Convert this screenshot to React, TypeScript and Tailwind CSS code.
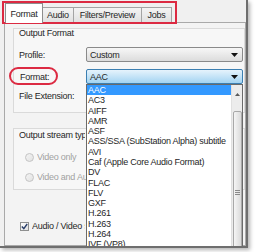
import React from "react"

const formats = [
    "AAC",
    "AC3",
    "AIFF",
    "AMR",
    "ASF",
    "ASS/SSA (SubStation Alpha) subtitle",
    "AVI",
    "Caf (Apple Core Audio Format)",
    "DV",
    "FLAC",
    "FLV",
    "GXF",
    "H.261",
    "H.263",
    "H.264",
    "IVF (VP8)",
]

const Arrow = () => (
    <svg width="7" height="4" viewBox="0 0 7 4" className="shrink-0">
        <path d="M0 0 L7 0 L3.5 4 Z" fill="#111" />
    </svg>
)

// labels that run under the open list are cut where the list starts
const Radio = ({ label }: { label: string }) => (
    <div className="h-[14px] flex flex-row items-center gap-[3px] pl-[6px]">
        <div className="w-[9px] h-[9px] shrink-0 rounded-full border border-[#c4c4c4] bg-gradient-to-br from-[#f4f4f4] to-[#e2e2e2]" />
        <span className="w-[53px] text-[#a2a2a2] whitespace-nowrap overflow-hidden">{label}</span>
    </div>
)

export default function App() {
    return (
        <div className="w-[259px] h-[252px] bg-white relative overflow-hidden text-[9px] leading-[10px] tracking-[-0.25px] text-[#262626] font-['Liberation_Sans',Arial,sans-serif]">
            <div className="w-[248px] h-[248px] bg-[#f0f0f0] border-r-2 border-b-2 border-[#6e6e6e] shadow-[2px_2px_4px_rgba(0,0,0,0.3)] overflow-hidden flex flex-col pt-[3px] pl-[4px]">
                {/* tabs */}
                <div className="h-[19px] flex flex-row items-end pl-[1px] relative z-10">
                    <div className="w-[38px] h-[20px] -mb-[1px] bg-white border border-b-0 border-[#8d8d8d] flex items-center justify-center">Format</div>
                    <div className="w-[31px] h-[15px] bg-gradient-to-b from-[#f4f4f4] to-[#e1e1e1] border border-l-0 border-b-0 border-[#a4a4a4] flex items-center justify-center">Audio</div>
                    <div className="w-[68px] h-[15px] bg-gradient-to-b from-[#f4f4f4] to-[#e1e1e1] border border-l-0 border-b-0 border-[#a4a4a4] flex items-center justify-center">Filters/Preview</div>
                    <div className="w-[30px] h-[15px] bg-gradient-to-b from-[#f4f4f4] to-[#e1e1e1] border border-l-0 border-b-0 border-[#a4a4a4] flex items-center justify-center">Jobs</div>
                </div>

                {/* tab page */}
                <div className="w-[242px] flex-1 bg-[#f3f3f3] border border-[#a9a9a9] flex flex-col pl-[8px]">
                    <div className="w-[232px] h-[85px] mt-[5px] bg-[#f7f7f7] border border-[#dadada] flex flex-col pl-[5px]">
                        <span className="leading-[9px]">Output Format</span>

                        <div className="h-[15px] mt-[9px] flex flex-row items-center">
                            <span className="w-[67px]">Profile:</span>
                            <div className="w-[157px] h-[15px] rounded-[2px] border border-[#8a8a8a] bg-gradient-to-b from-[#f7f7f7] to-[#dcdcdc] flex flex-row items-center justify-between pl-[3px] pr-[4px]">
                                <span>Custom</span>
                                <Arrow />
                            </div>
                        </div>

                        <div className="h-[15px] mt-[7px] flex flex-row items-center">
                            <span className="w-[67px] pl-[1px]">Format:</span>
                            <div className="relative w-[157px] h-[15px]">
                                <div className="w-full h-full rounded-[2px] border border-[#3c7fb1] bg-gradient-to-b from-[#e6f3fc] to-[#a3d4f2] flex flex-row items-center justify-between pl-[3px] pr-[4px]">
                                    <span>AAC</span>
                                    <Arrow />
                                </div>

                                {/* open list */}
                                <div className="absolute top-full left-0 w-full h-[170px] bg-white border border-[#6a6a6a] flex flex-row">
                                    <div className="flex-1 flex flex-col">
                                        {formats.map((f, i) => (
                                            <div
                                                key={f}
                                                className={
                                                    i === 0
                                                        ? "h-[10.27px] shrink-0 flex items-center pl-[1px] bg-[#3399ff] text-white whitespace-nowrap"
                                                        : "h-[10.27px] shrink-0 flex items-center pl-[1px] whitespace-nowrap"
                                                }
                                            >
                                                {f}
                                            </div>
                                        ))}
                                    </div>
                                    <div className="w-[11px] bg-[#ececec] border-l border-[#e0e0e0] flex flex-col items-center">
                                        <div className="h-[18px] flex items-center justify-center">
                                            <svg width="5" height="3" viewBox="0 0 5 3">
                                                <path d="M0 3 L5 3 L2.5 0 Z" fill="#5a5a5a" />
                                            </svg>
                                        </div>
                                        <div className="w-[9px] flex-1 mt-[8px] rounded-[2px] border border-[#a8a8a8] bg-gradient-to-r from-[#f5f5f5] to-[#dadada] flex flex-col items-center pt-[78px] gap-[1px]">
                                            <div className="w-[5px] h-px bg-[#8a8a8a]" />
                                            <div className="w-[5px] h-px bg-[#8a8a8a]" />
                                            <div className="w-[5px] h-px bg-[#8a8a8a]" />
                                        </div>
                                    </div>
                                </div>
                            </div>
                        </div>

                        <div className="h-[15px] mt-[4px] flex flex-row items-center">
                            <span>File Extension:</span>
                        </div>
                    </div>

                    <div className="w-[232px] h-[62px] mt-[15px] bg-[#f7f7f7] border border-[#dadada] flex flex-col pl-[5px] pt-[1px]">
                        <span className="w-[66px] whitespace-nowrap overflow-hidden">Output stream type</span>
                        <div className="mt-[10px]">
                            <Radio label="Video only" />
                        </div>
                        <div className="mt-[6px]">
                            <Radio label="Video and Audio" />
                        </div>
                    </div>

                    <div className="h-[12px] mt-[30px] flex flex-row items-center gap-[3px] pl-[7px]">
                        <div className="w-[9px] h-[9px] shrink-0 border border-[#8e8f8f] bg-gradient-to-br from-[#ffffff] to-[#e0e0e0] flex items-center justify-center">
                            <svg width="7" height="7" viewBox="0 0 7 7">
                                <path d="M0.8 3.6 L2.8 5.6 L6.2 1" stroke="#2a3f6a" strokeWidth="1.4" fill="none" />
                            </svg>
                        </div>
                        <span className="w-[53px] whitespace-nowrap overflow-hidden">Audio / Video stream</span>
                    </div>
                </div>
            </div>

            {/* annotations */}
            <div className="absolute left-[2px] top-[1px] w-[175px] h-[23px] border-2 border-[#dc2a42] pointer-events-none" />
            <div className="absolute left-[9px] top-[67px] w-[49px] h-[18px] border-2 border-[#dc2a42] rounded-full pointer-events-none" />
        </div>
    )
}
